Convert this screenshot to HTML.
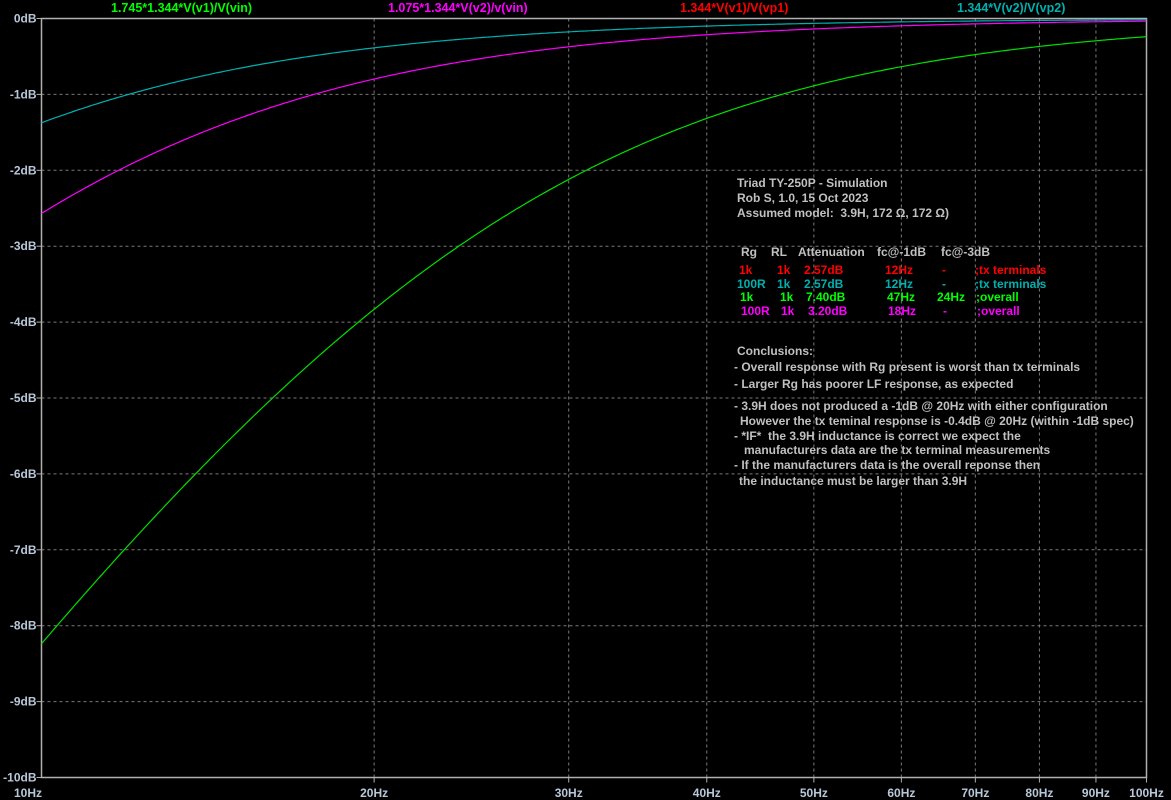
<!DOCTYPE html>
<html><head><meta charset="utf-8">
<style>
html,body{margin:0;padding:0;background:#000;width:1171px;height:800px;overflow:hidden}
svg{display:block}
text{font-family:"Liberation Sans",Arial,sans-serif;font-weight:bold;font-size:12px;white-space:pre}
.ax{fill:#b8c8d8}
.an{fill:#c0c0c0;font-weight:normal}
.top{font-size:12.5px}
</style></head><body>
<svg id="s" width="1171" height="800" xmlns="http://www.w3.org/2000/svg">
<g id="grid" stroke="#7a7a7a" stroke-width="1" stroke-dasharray="3,3" fill="none"></g>
<rect x="41.5" y="18.5" width="1105" height="759" fill="none" stroke="#b0b0b0" stroke-width="1.5"/>
<g id="labels"></g>
<g id="curves" fill="none" stroke-width="1.2"></g>
<text class="top" x="111" y="12" fill="#00ff00">1.745*1.344*V(v1)/V(vin)</text>
<text class="top" x="388" y="12" fill="#ff00ff">1.075*1.344*V(v2)/v(vin)</text>
<text class="top" x="680" y="12" fill="#ff0000">1.344*V(v1)/V(vp1)</text>
<text class="top" x="957" y="12" fill="#00b0b0">1.344*V(v2)/V(vp2)</text>
<g class="an">
<text x="737" y="187">Triad TY-250P - Simulation</text>
<text x="737" y="202">Rob S, 1.0, 15 Oct 2023</text>
<text x="737" y="217">Assumed model:  3.9H, 172 Ω, 172 Ω)</text>
<text x="741" y="256">Rg</text><text x="771" y="256">RL</text><text x="798" y="256">Attenuation</text><text x="877" y="256">fc@-1dB</text><text x="941" y="256">fc@-3dB</text>
</g>
<g style="font-weight:bold">
<text x="739" y="274" fill="#ff0000">1k</text><text x="777" y="274" fill="#ff0000">1k</text><text x="804" y="274" fill="#ff0000">2.57dB</text><text x="885" y="274" fill="#ff0000">12Hz</text><text x="942" y="274" fill="#ff0000">-</text><text x="975" y="274" fill="#ff0000">;tx terminals</text>
<text x="737" y="288" fill="#00b0b0">100R</text><text x="777" y="288" fill="#00b0b0">1k</text><text x="804" y="288" fill="#00b0b0">2.57dB</text><text x="885" y="288" fill="#00b0b0">12Hz</text><text x="942" y="288" fill="#00b0b0">-</text><text x="975" y="288" fill="#00b0b0">;tx terminals</text>
<text x="740" y="301" fill="#00ff00">1k</text><text x="780" y="301" fill="#00ff00">1k</text><text x="806" y="301" fill="#00ff00">7.40dB</text><text x="887" y="301" fill="#00ff00">47Hz</text><text x="937" y="301" fill="#00ff00">24Hz</text><text x="976" y="301" fill="#00ff00">;overall</text>
<text x="741" y="315" fill="#ff00ff">100R</text><text x="781" y="315" fill="#ff00ff">1k</text><text x="808" y="315" fill="#ff00ff">3.20dB</text><text x="888" y="315" fill="#ff00ff">18Hz</text><text x="943" y="315" fill="#ff00ff">-</text><text x="977" y="315" fill="#ff00ff">;overall</text>
</g>
<g class="an">
<text x="737" y="355">Conclusions:</text>
<text x="734" y="371">- Overall response with Rg present is worst than tx terminals</text>
<text x="734" y="388">- Larger Rg has poorer LF response, as expected</text>
<text x="734" y="410">- 3.9H does not produced a -1dB @ 20Hz with either configuration</text>
<text x="740" y="425">However the tx teminal response is -0.4dB @ 20Hz (within -1dB spec)</text>
<text x="734" y="440">- *IF*  the 3.9H inductance is correct we expect the</text>
<text x="744" y="454">manufacturers data are the tx terminal measurements</text>
<text x="734" y="469">- If the manufacturers data is the overall reponse then</text>
<text x="739" y="485">the inductance must be larger than 3.9H</text>
</g>
</svg>
<script>
var L=41.5,R=1146.5,T=18.5,B=777.5,W=R-L,dpy=(B-T)/10;
function X(f){return L+W*Math.log10(f/10);}
function Y(d){return T-d*dpy;}
var ns="http://www.w3.org/2000/svg";
var g=document.getElementById('grid'),lb=document.getElementById('labels');
function el(p,t,a,txt){var e=document.createElementNS(ns,t);for(var k in a)e.setAttribute(k,a[k]);if(txt)e.textContent=txt;p.appendChild(e);return e;}
for(var i=1;i<10;i++){var y=Y(-i);el(g,'line',{x1:L,y1:y,x2:R,y2:y});}
for(var i=0;i<=10;i++){var y=Y(-i);el(lb,'line',{x1:L-5,y1:y,x2:L,y2:y,stroke:'#b0b0b0'});el(lb,'text',{x:L-5,y:y+4,'text-anchor':'end','class':'ax'},(i?'-':'')+i+'dB');}
for(var f=20;f<=100;f+=10){var x=X(f);if(f<100)el(g,'line',{x1:x,y1:T,x2:x,y2:B});el(lb,'line',{x1:x,y1:B,x2:x,y2:B+5,stroke:'#b0b0b0'});el(lb,'text',{x:x,y:797,'text-anchor':'middle','class':'ax'},f+'Hz');}
el(lb,'text',{x:28,y:797,'text-anchor':'middle','class':'ax'},'10Hz');
var cs=document.getElementById('curves');
[[6.1,'#00b0b0'],[8.98,'#ff00ff'],[23.8,'#00e000']].forEach(function(c){
 var p='';for(var i=0;i<=400;i++){var f=10*Math.pow(10,i/400);var d=-10*Math.log10(1+Math.pow(c[0]/f,2));p+=(i?'L':'M')+X(f).toFixed(1)+','+Y(d).toFixed(1);}
 el(cs,'path',{d:p,stroke:c[1]});
});
</script>
</body></html>
